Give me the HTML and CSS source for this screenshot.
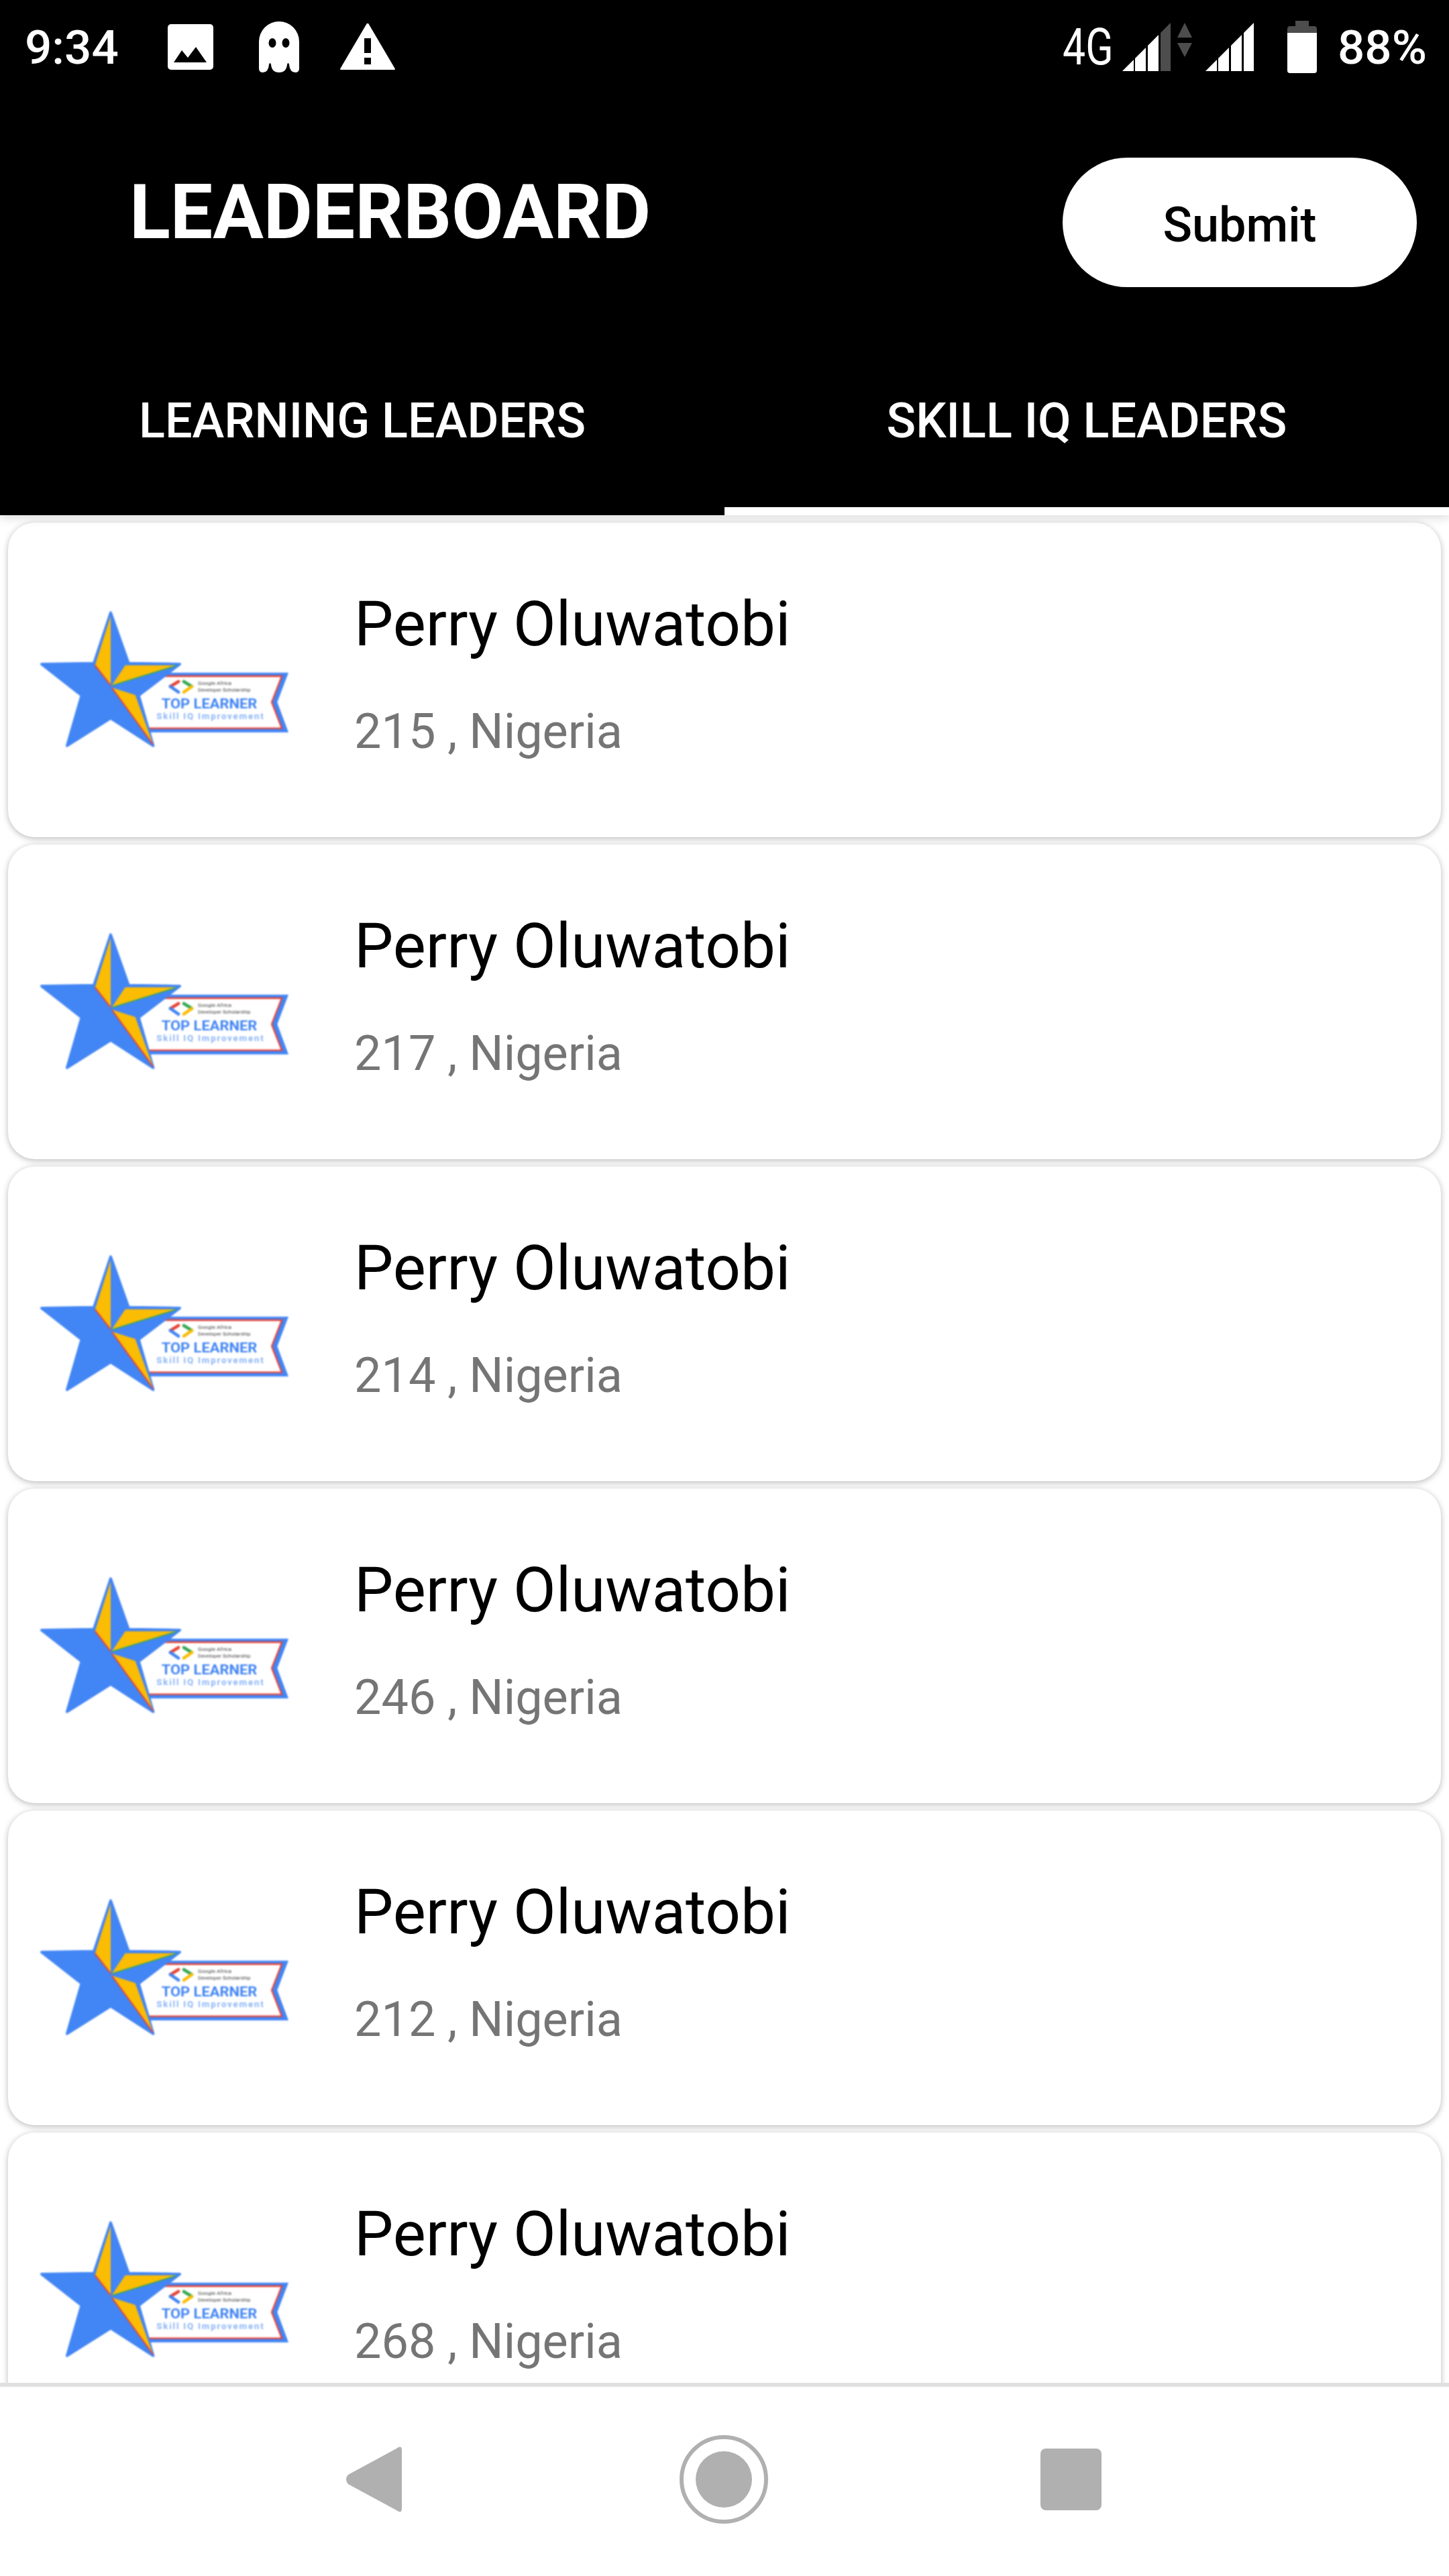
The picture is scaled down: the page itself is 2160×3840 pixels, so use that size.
FILE: index.html

```html
<!doctype html>
<html lang="en">
<head>
    <meta charset="utf-8">
    <meta name="viewport" content="width=device-width, initial-scale=1, shrink-to-fit=no">
    <link rel="stylesheet" href="styles.css">
    <title>Leaderboard</title>
</head>
<body>
<svg class="defs" width="0" height="0">
    <symbol id="badge-art" viewBox="0 0 1260 780">
        <polygon points="600,368 1200,368 1150,500 1200,635 560,635 500,470" fill="#4285f4"/>
        <polygon points="640,384 1170,384 1125,500 1170,617 560,617 530,470" fill="#fff" stroke="#ea4335" stroke-width="7"/>
        <polygon points="405,100 485,326 714,330 530,470 595,695 405,572 210,695 275,470 96,330 330,326" fill="#4285f4" stroke="#4285f4" stroke-width="12" stroke-linejoin="round"/>
        <polygon points="405,115 335,335 405,425" fill="#fbbc04"/>
        <polygon points="410,425 470,335 700,335" fill="#fbbc04"/>
        <polygon points="410,435 515,468 595,690" fill="#fbbc04"/>
        <path d="M335 335L405 425M410 435L595 690" stroke="#ea4335" stroke-width="6"/>
        <path d="M410 426L700 336" stroke="#34a853" stroke-width="5"/>
        <path d="M708 408L672 430" stroke="#ea4335" stroke-width="14" stroke-linecap="round"/>
        <path d="M672 430L708 455" stroke="#4285f4" stroke-width="14" stroke-linecap="round"/>
        <path d="M732 408L768 430" stroke="#34a853" stroke-width="14" stroke-linecap="round"/>
        <path d="M768 430L732 455" stroke="#fbbc04" stroke-width="14" stroke-linecap="round"/>
    </symbol>
</svg>

<header class="header">
    <div class="status">
        <span class="clock">9:34</span>
        <svg class="icon-image" width="68" height="68" viewBox="0 0 68 68">
            <rect width="68" height="68" rx="5" fill="#fff"/>
            <polygon points="9,57 21,39 30,50 42,34 58,57" fill="#000"/>
        </svg>
        <svg class="icon-ghost" width="60" height="76" viewBox="0 0 60 76">
            <path d="M0 30A30 30 0 0 1 60 30V70Q60 76 54 76Q46 76 45 64Q43.500 60 42 64Q41 76 30 76Q19 76 18 64Q16.500 60 15 64Q14 76 6 76Q0 76 0 70Z" fill="#fff"/>
            <ellipse cx="20" cy="32" rx="5.500" ry="7" fill="#000"/>
            <ellipse cx="40" cy="32" rx="5.500" ry="7" fill="#000"/>
        </svg>
        <svg class="icon-warning" width="82" height="70" viewBox="0 0 82 70">
            <path d="M41 0L81 68H1Z" fill="#fff" stroke="#fff" stroke-width="2" stroke-linejoin="round"/>
            <rect x="36" y="22" width="10" height="22" fill="#000"/>
            <rect x="36" y="51" width="10" height="10" fill="#000"/>
        </svg>
        <div class="status-right">
            <span class="network">4G</span>
            <svg class="icon-signal" width="72" height="72" viewBox="0 0 72 72">
                <polygon points="0,72 17,55 17,72" fill="#fff"/>
                <polygon points="19,53 35,37 35,72 19,72" fill="#fff"/>
                <polygon points="38,34 54,18 54,72 38,72" fill="#fff"/>
                <polygon points="57,15 72,0 72,72 57,72" fill="#4d4d4d"/>
            </svg>
            <svg class="icon-arrows" width="22" height="72" viewBox="0 0 22 72">
                <polygon points="11,0 22,22 0,22" fill="#4d4d4d"/>
                <polygon points="0,30 22,30 11,51" fill="#4d4d4d"/>
            </svg>
            <svg class="icon-signal2" width="72" height="72" viewBox="0 0 72 72">
                <polygon points="0,72 17,55 17,72" fill="#fff"/>
                <polygon points="19,53 35,37 35,72 19,72" fill="#fff"/>
                <polygon points="38,34 54,18 54,72 38,72" fill="#fff"/>
                <polygon points="57,15 72,0 72,72 57,72" fill="#fff"/>
            </svg>
            <svg class="icon-battery" width="44" height="78" viewBox="0 0 44 78">
                <rect x="12" y="0" width="20" height="12" fill="#4d4d4d"/>
                <path d="M0 18V12Q0 8 4 8H40Q44 8 44 12V18Z" fill="#4d4d4d"/>
                <path d="M0 18H44V74Q44 78 40 78H4Q0 78 0 74Z" fill="#fff"/>
            </svg>
            <span class="battery-text">88%</span>
        </div>
    </div>
    <div class="toolbar">
        <h1 class="title">LEADERBOARD</h1>
        <button class="submit" type="button">Submit</button>
    </div>
    <div class="tabs">
        <div class="tab">LEARNING LEADERS</div>
        <div class="tab tab-active">SKILL IQ LEADERS</div>
    </div>
</header>

<main class="list">
    <div class="card">
        <svg class="badge" viewBox="0 0 1260 780">
            <use href="#badge-art" width="1260" height="780"/>
            <text class="badge-small" x="795" y="422" textLength="150" lengthAdjust="spacingAndGlyphs">Google Africa</text>
            <text class="badge-small" x="795" y="453" textLength="235" lengthAdjust="spacingAndGlyphs">Developer Scholarship</text>
            <text class="badge-top" x="632" y="528" textLength="428" lengthAdjust="spacingAndGlyphs">TOP LEARNER</text>
            <text class="badge-skill" x="610" y="575" textLength="478" lengthAdjust="spacing">Skill IQ Improvement</text>
        </svg>
        <div class="info">
            <div class="name">Perry Oluwatobi</div>
            <div class="detail">215 , Nigeria</div>
        </div>
    </div>
    <div class="card">
        <svg class="badge" viewBox="0 0 1260 780">
            <use href="#badge-art" width="1260" height="780"/>
            <text class="badge-small" x="795" y="422" textLength="150" lengthAdjust="spacingAndGlyphs">Google Africa</text>
            <text class="badge-small" x="795" y="453" textLength="235" lengthAdjust="spacingAndGlyphs">Developer Scholarship</text>
            <text class="badge-top" x="632" y="528" textLength="428" lengthAdjust="spacingAndGlyphs">TOP LEARNER</text>
            <text class="badge-skill" x="610" y="575" textLength="478" lengthAdjust="spacing">Skill IQ Improvement</text>
        </svg>
        <div class="info">
            <div class="name">Perry Oluwatobi</div>
            <div class="detail">217 , Nigeria</div>
        </div>
    </div>
    <div class="card">
        <svg class="badge" viewBox="0 0 1260 780">
            <use href="#badge-art" width="1260" height="780"/>
            <text class="badge-small" x="795" y="422" textLength="150" lengthAdjust="spacingAndGlyphs">Google Africa</text>
            <text class="badge-small" x="795" y="453" textLength="235" lengthAdjust="spacingAndGlyphs">Developer Scholarship</text>
            <text class="badge-top" x="632" y="528" textLength="428" lengthAdjust="spacingAndGlyphs">TOP LEARNER</text>
            <text class="badge-skill" x="610" y="575" textLength="478" lengthAdjust="spacing">Skill IQ Improvement</text>
        </svg>
        <div class="info">
            <div class="name">Perry Oluwatobi</div>
            <div class="detail">214 , Nigeria</div>
        </div>
    </div>
    <div class="card">
        <svg class="badge" viewBox="0 0 1260 780">
            <use href="#badge-art" width="1260" height="780"/>
            <text class="badge-small" x="795" y="422" textLength="150" lengthAdjust="spacingAndGlyphs">Google Africa</text>
            <text class="badge-small" x="795" y="453" textLength="235" lengthAdjust="spacingAndGlyphs">Developer Scholarship</text>
            <text class="badge-top" x="632" y="528" textLength="428" lengthAdjust="spacingAndGlyphs">TOP LEARNER</text>
            <text class="badge-skill" x="610" y="575" textLength="478" lengthAdjust="spacing">Skill IQ Improvement</text>
        </svg>
        <div class="info">
            <div class="name">Perry Oluwatobi</div>
            <div class="detail">246 , Nigeria</div>
        </div>
    </div>
    <div class="card">
        <svg class="badge" viewBox="0 0 1260 780">
            <use href="#badge-art" width="1260" height="780"/>
            <text class="badge-small" x="795" y="422" textLength="150" lengthAdjust="spacingAndGlyphs">Google Africa</text>
            <text class="badge-small" x="795" y="453" textLength="235" lengthAdjust="spacingAndGlyphs">Developer Scholarship</text>
            <text class="badge-top" x="632" y="528" textLength="428" lengthAdjust="spacingAndGlyphs">TOP LEARNER</text>
            <text class="badge-skill" x="610" y="575" textLength="478" lengthAdjust="spacing">Skill IQ Improvement</text>
        </svg>
        <div class="info">
            <div class="name">Perry Oluwatobi</div>
            <div class="detail">212 , Nigeria</div>
        </div>
    </div>
    <div class="card">
        <svg class="badge" viewBox="0 0 1260 780">
            <use href="#badge-art" width="1260" height="780"/>
            <text class="badge-small" x="795" y="422" textLength="150" lengthAdjust="spacingAndGlyphs">Google Africa</text>
            <text class="badge-small" x="795" y="453" textLength="235" lengthAdjust="spacingAndGlyphs">Developer Scholarship</text>
            <text class="badge-top" x="632" y="528" textLength="428" lengthAdjust="spacingAndGlyphs">TOP LEARNER</text>
            <text class="badge-skill" x="610" y="575" textLength="478" lengthAdjust="spacing">Skill IQ Improvement</text>
        </svg>
        <div class="info">
            <div class="name">Perry Oluwatobi</div>
            <div class="detail">268 , Nigeria</div>
        </div>
    </div>
</main>

<nav class="nav">
    <svg width="84" height="98" viewBox="0 0 84 98">
        <path d="M76 3Q84 -3 84 6V92Q84 101 76 95L4 56Q-2 49 4 42Z" fill="#b0b0b0"/>
    </svg>
    <svg class="nav-home" width="132" height="132" viewBox="0 0 132 132">
        <circle cx="66" cy="66" r="63" fill="none" stroke="#b0b0b0" stroke-width="6"/>
        <circle cx="66" cy="66" r="42" fill="#b0b0b0"/>
    </svg>
    <svg width="91" height="92" viewBox="0 0 91 92">
        <rect width="91" height="92" rx="8" fill="#b0b0b0"/>
    </svg>
</nav>
</body>
</html>
```

FILE: styles.css

```css
* {
    box-sizing: border-box;
}

html, body {
    margin: 0;
    width: 2160px;
    height: 3840px;
    overflow: hidden;
    background-color: #fff;
    font-family: Roboto, sans-serif;
}

body {
    display: flex;
    flex-direction: column;
}

.defs {
    display: block;
    height: 0;
}

.header {
    position: relative;
    z-index: 1;
    background-color: #000;
    color: #fff;
    box-shadow: 0 4px 14px rgba(0, 0, 0, 0.14);
}

.status {
    display: flex;
    align-items: center;
    height: 140px;
    padding: 0 33px 0 37px;
    font-size: 71px;
    font-weight: 500;
}

.clock {
    width: 138px;
    margin-right: 75px;
}

.icon-image {
    margin-right: 68px;
}

.icon-ghost {
    margin-right: 61px;
}

.status-right {
    display: flex;
    align-items: center;
    margin-left: auto;
}

.network {
    width: 75px;
    margin-right: 14px;
    font-size: 76px;
    font-weight: 400;
    transform: scaleX(0.8);
    transform-origin: left center;
}

.icon-arrows {
    margin-left: 10px;
    margin-right: 20px;
}

.icon-battery {
    margin-left: 50px;
    margin-right: 31px;
}

.toolbar {
    display: flex;
    align-items: flex-start;
    justify-content: space-between;
    height: 346px;
    padding: 95px 48px 0 193px;
}

.title {
    margin: 17px 0 0;
    font-size: 112.500px;
    font-weight: 700;
    line-height: 130px;
}

.submit {
    width: 528px;
    height: 193px;
    padding: 8px 0 0;
    border: none;
    border-radius: 97px;
    background-color: #fff;
    color: #000;
    font-family: Roboto, sans-serif;
    font-size: 72px;
    font-weight: 500;
}

.tabs {
    display: grid;
    grid-template-columns: 1fr 1fr;
}

.tab {
    display: flex;
    align-items: center;
    justify-content: center;
    height: 282px;
    padding-top: 12px;
    border-bottom: 12px solid transparent;
    font-size: 72px;
    font-weight: 500;
}

.tab-active {
    border-bottom-color: #fff;
}

.list {
    flex: 1;
    min-height: 0;
    overflow: hidden;
    display: flex;
    flex-direction: column;
    gap: 11px;
    padding: 11px 12px 0;
}

.card {
    flex: none;
    display: flex;
    height: 469px;
    padding: 92px 18px 0;
    border-radius: 40px;
    background-color: #fff;
    box-shadow: 0 2px 10px rgba(0, 0, 0, 0.28);
}

.badge {
    flex: none;
    width: 420px;
    height: 260px;
    margin-top: 9px;
    filter: blur(1.2px);
}

.badge-small {
    font-family: Roboto, sans-serif;
    font-size: 24px;
    fill: #444;
}

.badge-top {
    font-family: Roboto, sans-serif;
    font-size: 62px;
    font-weight: 700;
    fill: #4285f4;
}

.badge-skill {
    font-family: Roboto, sans-serif;
    font-size: 40px;
    font-weight: 700;
    fill: #8ab4f8;
}

.info {
    margin-left: 78px;
}

.name {
    font-size: 92.500px;
    line-height: 120px;
    color: #000;
}

.detail {
    margin-top: 50px;
    font-size: 72px;
    line-height: 100px;
    color: #757575;
}

.nav {
    flex: none;
    display: flex;
    align-items: center;
    justify-content: center;
    gap: 410px;
    height: 288px;
    padding: 0 4px 6px 0;
    border-top: 6px solid #e0e0e0;
    background-color: #fff;
    position: relative;
    z-index: 1;
}

.nav-home {
    margin: 0 -4px 0 4px;
}
```
